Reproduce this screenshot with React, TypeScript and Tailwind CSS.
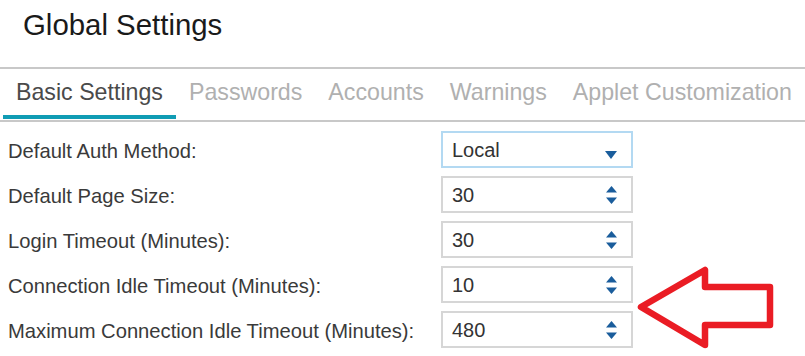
import React from "react";

const tabs = ["Basic Settings", "Passwords", "Accounts", "Warnings", "Applet Customization"];

const rows: { label: string; value: string; kind: "select" | "spin" }[] = [
  { label: "Default Auth Method:", value: "Local", kind: "select" },
  { label: "Default Page Size:", value: "30", kind: "spin" },
  { label: "Login Timeout (Minutes):", value: "30", kind: "spin" },
  { label: "Connection Idle Timeout (Minutes):", value: "10", kind: "spin" },
  { label: "Maximum Connection Idle Timeout (Minutes):", value: "480", kind: "spin" },
];

function Spinner() {
  return (
    <svg width="11" height="18" viewBox="0 0 11 18" className="shrink-0">
      <polygon points="0,6.5 5.5,0 11,6.5" fill="#1a5d9c" />
      <polygon points="0,11.5 11,11.5 5.5,18" fill="#1a5d9c" />
    </svg>
  );
}

function Caret() {
  return (
    <svg width="12" height="8" viewBox="0 0 12 8" className="shrink-0 mt-[10px]">
      <polygon points="0,0 12,0 6,8" fill="#1a5d9c" />
    </svg>
  );
}

export default function App() {
  return (
    <div
      className="relative w-[805px] h-[356px] overflow-hidden bg-white"
      style={{ fontFamily: '"Liberation Sans", Arial, sans-serif' }}
    >
      <div className="pl-[23px] pt-[9px] h-[67px] text-[29.4px] leading-[32px] text-[#1a1a1a]">
        Global Settings
      </div>
      <div className="flex border-t-2 border-b-2 border-[#c8c8c8] pl-[3px]">
        {tabs.map((t, i) => (
          <div
            key={t}
            className={
              i === 0
                ? "px-[13px] pt-[10px] pb-[10px] text-[23.2px] leading-[26px] whitespace-nowrap text-[#4a4a4a] border-b-4 border-[#109cb4] mb-[1px]"
                : "px-[13px] pt-[10px] pb-[15px] text-[23.2px] leading-[26px] whitespace-nowrap text-[#b0b0b0]"
            }
          >
            {t}
          </div>
        ))}
      </div>
      <div className="flex flex-col gap-[8px] pt-[9px] pl-[8px]">
        {rows.map((r, i) => (
          <div key={r.label} className="flex items-center h-[37px]">
            <div className="w-[433px] text-[20.2px] leading-[24px] text-[#3a3a3a] whitespace-nowrap pt-[2px]">
              {r.label}
            </div>
            <div
              className={
                i === 0
                  ? "flex items-center justify-between w-[192px] h-[37px] border-2 border-[#b3d9f2] pl-[9px] pr-[14px]"
                  : "flex items-center justify-between w-[192px] h-[37px] border-2 border-[#d6d6d6] pl-[9px] pr-[14px]"
              }
            >
              <span className="text-[20px] leading-[24px] text-[#333333] pt-[1px]">{r.value}</span>
              {r.kind === "select" ? <Caret /> : <Spinner />}
            </div>
          </div>
        ))}
      </div>
      <svg
        className="absolute left-[630px] top-[258px]"
        width="150"
        height="96"
        viewBox="0 0 150 96"
      >
        <polygon
          points="11,49 75,12 75,29 140,29 140,67 75,67 75,87"
          fill="none"
          stroke="#ea1c24"
          strokeWidth="6.5"
          strokeLinejoin="round"
        />
      </svg>
    </div>
  );
}
